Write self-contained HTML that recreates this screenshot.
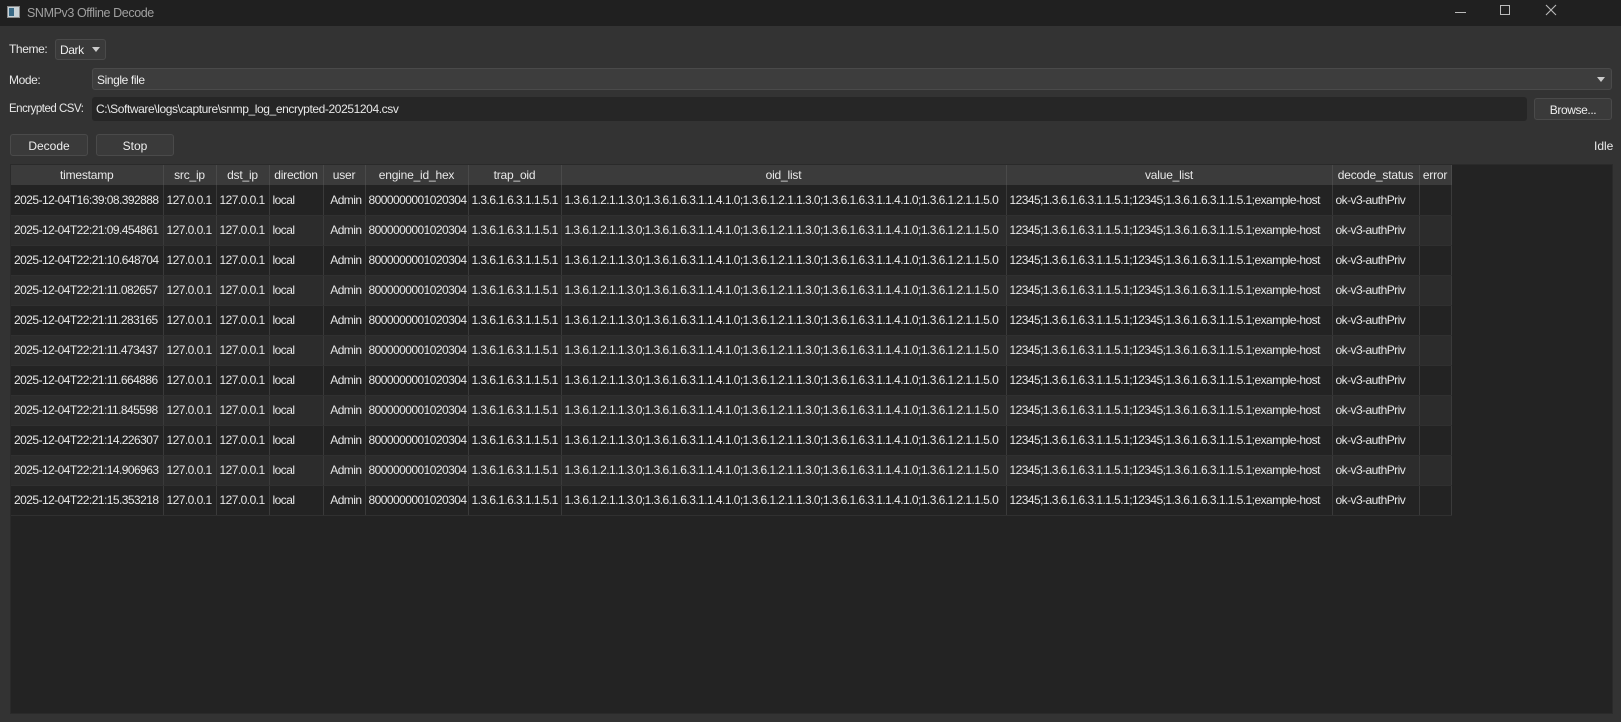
<!DOCTYPE html>
<html><head><meta charset="utf-8"><style>
*{box-sizing:border-box;margin:0;padding:0}
body{width:1621px;height:722px;background:#333333;font-family:"Liberation Sans",sans-serif;font-size:12px;color:#e8e8e8;position:relative;overflow:hidden}
.a{position:absolute}
.title{left:0;top:0;width:1621px;height:26px;background:#202020;color:#a0a0a0}
.btn{background:#3a3a3a;border:1px solid #4a4a4a;border-radius:3px;text-align:center;color:#eee}
.field{background:#262626;border-radius:3px}
.lbl{letter-spacing:-0.4px}
table{border-collapse:collapse;table-layout:fixed}
td,th{height:30px;border-right:1px solid #3a3a3a;border-bottom:1px solid #303030;white-space:nowrap;overflow:hidden;padding:0 3px;font-weight:normal;letter-spacing:-0.55px}
th{height:20px;background:#3b3b3b;color:#e8e8e8;text-align:center;border-right:1px solid #4a4a4a;border-bottom:none;letter-spacing:-0.2px}
tr.o td{background:#232323}
tr.e td{background:#2c2c2c}
</style></head><body>
<div class="a title">
 <div class="a" style="left:7px;top:6px;width:13px;height:12px;background:#c9d3d8;border:1px solid #888"><div class="a" style="left:1px;top:1px;width:5px;height:8px;background:#3a6a86"></div></div>
 <div class="a lbl" style="left:27px;top:6px;font-size:12.5px">SNMPv3 Offline Decode</div>
 <div class="a" style="left:1455px;top:12px;width:11px;height:1px;background:#bbb"></div>
 <div class="a" style="left:1500px;top:5px;width:10px;height:10px;border:1px solid #bbb"></div>
 <svg class="a" style="left:1545px;top:4px" width="12" height="12"><path d="M1 1L11 11M11 1L1 11" stroke="#bbb" stroke-width="1.1"/></svg>
</div>
<div class="a lbl" style="left:9px;top:42px">Theme:</div>
<div class="a btn lbl" style="left:55px;top:39px;width:51px;height:21px;text-align:left;padding:3px 0 0 4px">Dark</div>
<div class="a" style="left:92px;top:47px;width:0;height:0;border-left:4px solid transparent;border-right:4px solid transparent;border-top:5px solid #ccc"></div>
<div class="a lbl" style="left:9px;top:73px">Mode:</div>
<div class="a btn lbl" style="left:92px;top:68px;width:1520px;height:22px;text-align:left;padding:4px 0 0 4px;background:#3d3d3d">Single file</div>
<div class="a" style="left:1597px;top:77px;width:0;height:0;border-left:4px solid transparent;border-right:4px solid transparent;border-top:5px solid #ccc"></div>
<div class="a lbl" style="left:9px;top:103px;font-size:11.5px;letter-spacing:-0.5px">Encrypted CSV:</div>
<div class="a field lbl" style="left:92px;top:97px;width:1435px;height:24px;padding:5px 0 0 4px">C:\Software\logs\capture\snmp_log_encrypted-20251204.csv</div>
<div class="a btn lbl" style="left:1534px;top:98px;width:78px;height:22px;padding-top:4px">Browse...</div>
<div class="a btn" style="left:10px;top:134px;width:78px;height:22px;padding-top:4px">Decode</div>
<div class="a btn" style="left:96px;top:134px;width:78px;height:22px;padding-top:4px">Stop</div>
<div class="a" style="left:1594px;top:139px">Idle</div>
<div class="a" style="left:10px;top:164px;width:1603px;height:550px;background:#232323;border:1px solid #2a2a2a">
<table style="width:1440px">
<colgroup><col style="width:152px"><col style="width:53px"><col style="width:53px"><col style="width:54px"><col style="width:42px"><col style="width:103px"><col style="width:93px"><col style="width:445px"><col style="width:326px"><col style="width:87px"><col style="width:32px"></colgroup>
<tr><th>timestamp</th><th>src_ip</th><th>dst_ip</th><th>direction</th><th>user</th><th>engine_id_hex</th><th>trap_oid</th><th>oid_list</th><th>value_list</th><th>decode_status</th><th>error</th></tr>
<tbody id="b"></tbody>
</table></div>
<script>
var ts=["2025-12-04T16:39:08.392888","2025-12-04T22:21:09.454861","2025-12-04T22:21:10.648704","2025-12-04T22:21:11.082657","2025-12-04T22:21:11.283165","2025-12-04T22:21:11.473437","2025-12-04T22:21:11.664886","2025-12-04T22:21:11.845598","2025-12-04T22:21:14.226307","2025-12-04T22:21:14.906963","2025-12-04T22:21:15.353218"];
var h="";ts.forEach(function(t,i){h+='<tr class="'+(i%2?'e':'o')+'"><td>'+t+'</td><td>127.0.0.1</td><td>127.0.0.1</td><td>local</td><td style="text-align:right">Admin</td><td>8000000001020304</td><td>1.3.6.1.6.3.1.1.5.1</td><td>1.3.6.1.2.1.1.3.0;1.3.6.1.6.3.1.1.4.1.0;1.3.6.1.2.1.1.3.0;1.3.6.1.6.3.1.1.4.1.0;1.3.6.1.2.1.1.5.0</td><td>12345;1.3.6.1.6.3.1.1.5.1;12345;1.3.6.1.6.3.1.1.5.1;example-host</td><td>ok-v3-authPriv</td><td></td></tr>';});
document.getElementById("b").innerHTML=h;
</script>
</body></html>
